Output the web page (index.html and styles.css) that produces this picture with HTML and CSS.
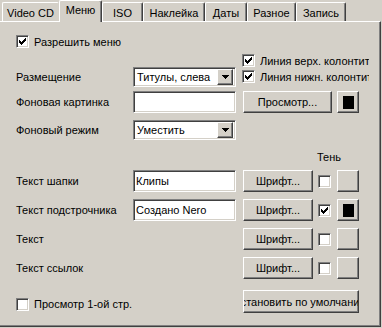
FILE: index.html
```html
<!DOCTYPE html>
<html>
<head>
  <meta charset="utf-8">
  <title>Меню</title>
  <link rel="stylesheet" href="styles.css">
</head>
<body>
  <div class="tabs">
    <div class="tab tab-vcd">Video CD</div>
    <div class="tab tab-menu active">Меню</div>
    <div class="tab tab-iso">ISO</div>
    <div class="tab tab-label">Наклейка</div>
    <div class="tab tab-dates">Даты</div>
    <div class="tab tab-misc">Разное</div>
    <div class="tab tab-burn">Запись</div>
  </div>

  <div class="panel">
    <label class="check check-enable">
      <span class="box"><svg width="7" height="7" viewBox="0 0 7 7"><path d="M0 2h1v1h1v1h1v-1h1v-1h1v-1h1v-1h1v3h-1v1h-1v1h-1v1h-1v1h-1v-1h-1v-1h-1z" fill="#000"/></svg></span>
      Разрешить меню
    </label>

    <div class="row row-place">
      <span class="label">Размещение</span>
      <div class="select">
        <span class="select-text">Титулы, слева</span>
        <span class="drop"><svg width="7" height="4" viewBox="0 0 7 4"><path d="M0 0h7v1h-1v1h-1v1h-1v1h-1v-1h-1v-1h-1v-1h-1z" fill="#000"/></svg></span>
      </div>
      <div class="lines">
        <label class="check">
          <span class="box"><svg width="7" height="7" viewBox="0 0 7 7"><path d="M0 2h1v1h1v1h1v-1h1v-1h1v-1h1v-1h1v3h-1v1h-1v1h-1v1h-1v1h-1v-1h-1v-1h-1z" fill="#000"/></svg></span>
          <span class="clip">Линия верх. колонтитула</span>
        </label>
        <label class="check">
          <span class="box"><svg width="7" height="7" viewBox="0 0 7 7"><path d="M0 2h1v1h1v1h1v-1h1v-1h1v-1h1v-1h1v3h-1v1h-1v1h-1v1h-1v1h-1v-1h-1v-1h-1z" fill="#000"/></svg></span>
          <span class="clip">Линия нижн. колонтитула</span>
        </label>
      </div>
    </div>

    <div class="row row-picture">
      <span class="label">Фоновая картинка</span>
      <div class="field"></div>
      <div class="btn btn-browse">Просмотр...</div>
      <div class="btn swatch"><span class="swatch-fill"></span></div>
    </div>

    <div class="row row-mode">
      <span class="label">Фоновый режим</span>
      <div class="select">
        <span class="select-text">Уместить</span>
        <span class="drop"><svg width="7" height="4" viewBox="0 0 7 4"><path d="M0 0h7v1h-1v1h-1v1h-1v1h-1v-1h-1v-1h-1v-1h-1z" fill="#000"/></svg></span>
      </div>
    </div>

    <div class="shadow-head">Тень</div>

    <div class="text-rows">
      <div class="row">
        <span class="label">Текст шапки</span>
        <div class="field">Клипы</div>
        <div class="btn btn-font">Шрифт...</div>
        <span class="box shadow-box"></span>
        <div class="btn swatch shadow-swatch"></div>
      </div>
      <div class="row">
        <span class="label">Текст подстрочника</span>
        <div class="field">Создано Nero</div>
        <div class="btn btn-font">Шрифт...</div>
        <span class="box shadow-box"><svg width="7" height="7" viewBox="0 0 7 7"><path d="M0 2h1v1h1v1h1v-1h1v-1h1v-1h1v-1h1v3h-1v1h-1v1h-1v1h-1v1h-1v-1h-1v-1h-1z" fill="#000"/></svg></span>
        <div class="btn swatch shadow-swatch"><span class="swatch-fill"></span></div>
      </div>
      <div class="row">
        <span class="label">Текст</span>
        <div class="field-gap"></div>
        <div class="btn btn-font">Шрифт...</div>
        <span class="box shadow-box"></span>
        <div class="btn swatch shadow-swatch"></div>
      </div>
      <div class="row">
        <span class="label">Текст ссылок</span>
        <div class="field-gap"></div>
        <div class="btn btn-font">Шрифт...</div>
        <span class="box shadow-box"></span>
        <div class="btn swatch shadow-swatch"></div>
      </div>
    </div>

    <div class="row row-bottom">
      <label class="check check-preview">
        <span class="box"></span>
        Просмотр 1-ой стр.
      </label>
      <div class="btn btn-default"><span>Установить по умолчанию</span></div>
    </div>
  </div>
</body>
</html>
```

FILE: styles.css
```css
body {
  margin: 0;
  width: 382px;
  height: 328px;
  overflow: hidden;
  background-color: #d4d0c8;
  font-family: 'Liberation Sans', Arial, sans-serif;
  font-size: 11px;
  color: #000;
}

/* Tab strip */
.tabs {
  display: flex;
  align-items: flex-end;
  height: 21px;
  padding-left: 2px;
  position: relative;
  z-index: 1;
}

.tab {
  box-sizing: border-box;
  height: 19px;
  border-top: 1px solid #fff;
  border-left: 1px solid #fff;
  border-right: 1px solid #404040;
  box-shadow: inset -1px 0 #808080;
  border-radius: 2px 2px 0 0;
  display: flex;
  align-items: center;
  justify-content: center;
  padding-top: 1px;
  white-space: nowrap;
}

.tab.active {
  height: 22px;
  margin-bottom: -1px;
  background-color: #d4d0c8;
  padding: 0 0 4px;
}

.tab-vcd { width: 57px; border-right-color: #d4d0c8; box-shadow: none; }
.tab-menu { width: 43px; }
.tab-iso { width: 41px; }
.tab-label { width: 62px; }
.tab-dates { width: 42px; }
.tab-misc { width: 49px; }
.tab-burn { width: 50px; }

/* Page panel */
.panel {
  box-sizing: border-box;
  width: 381px;
  height: 306px;
  border-top: 1px solid #fff;
  border-right: 1px solid #404040;
  border-bottom: 1px solid #404040;
  box-shadow: inset -1px -1px #808080;
  padding: 13px 0 0 16px;
}

.row {
  display: flex;
  align-items: center;
}

.label {
  width: 117px;
  flex: none;
  white-space: nowrap;
}

/* Checkboxes */
.check {
  display: flex;
  align-items: center;
  gap: 5px;
  height: 13px;
  white-space: nowrap;
}

.box {
  box-sizing: border-box;
  width: 13px;
  height: 13px;
  flex: none;
  background-color: #fff;
  border-top: 1px solid #808080;
  border-left: 1px solid #808080;
  border-right: 1px solid #fff;
  border-bottom: 1px solid #fff;
  box-shadow: inset 1px 1px #404040, inset -1px -1px #d4d0c8;
  display: flex;
  align-items: center;
  justify-content: center;
}

.box svg {
  display: block;
}

/* Sunken fields */
.field,
.select {
  box-sizing: border-box;
  width: 103px;
  flex: none;
  background-color: #fff;
  border-top: 1px solid #808080;
  border-left: 1px solid #808080;
  border-right: 1px solid #fff;
  border-bottom: 1px solid #fff;
  box-shadow: inset 1px 1px #404040, inset -1px -1px #d4d0c8;
  display: flex;
  align-items: center;
  white-space: nowrap;
}

.field {
  height: 22px;
  padding-left: 2px;
}

.field-gap {
  width: 103px;
  flex: none;
}

.select {
  height: 20px;
  padding: 2px 2px 2px 3px;
}

.select-text {
  flex: 1;
}

.drop {
  box-sizing: border-box;
  width: 16px;
  height: 16px;
  background-color: #d4d0c8;
  border-top: 1px solid #fff;
  border-left: 1px solid #fff;
  border-right: 1px solid #404040;
  border-bottom: 1px solid #404040;
  box-shadow: inset -1px -1px #808080;
  display: flex;
  align-items: center;
  justify-content: center;
}

.drop svg {
  display: block;
}

/* Raised buttons */
.btn {
  box-sizing: border-box;
  height: 22px;
  flex: none;
  background-color: #d4d0c8;
  border-top: 1px solid #fff;
  border-left: 1px solid #fff;
  border-right: 1px solid #404040;
  border-bottom: 1px solid #404040;
  box-shadow: inset -1px -1px #808080;
  display: flex;
  align-items: center;
  justify-content: center;
  white-space: nowrap;
}

.swatch {
  width: 22px;
}

.swatch-fill {
  width: 11px;
  height: 13px;
  background-color: #000;
}

/* Placement row */
.row-place {
  align-items: flex-end;
  height: 33px;
  margin-top: 6px;
}

.row-place .label {
  line-height: 20px;
}

.lines {
  display: flex;
  flex-direction: column;
  gap: 3px;
  width: 127px;
  margin: 0 0 4px 6px;
  overflow: hidden;
}

.clip {
  overflow: hidden;
}

.row-picture {
  margin-top: 4px;
}

.btn-browse {
  width: 89px;
  margin-left: 7px;
}

.row-picture .swatch {
  margin-left: 5px;
}

.row-mode {
  margin-top: 7px;
}

/* Text rows with font and shadow */
.shadow-head {
  height: 13px;
  line-height: 13px;
  margin: 11px 0 0 301px;
}

.text-rows {
  display: flex;
  flex-direction: column;
  gap: 7px;
  margin-top: 6px;
}

.btn-font {
  width: 70px;
  margin-left: 7px;
}

.shadow-box {
  margin-left: 5px;
}

.shadow-swatch {
  margin-left: 6px;
}

/* Bottom row */
.row-bottom {
  margin-top: 11px;
}

.check-preview {
  width: 227px;
  margin-top: 5px;
}

.btn-default {
  width: 116px;
  height: 23px;
  overflow: hidden;
}
```
